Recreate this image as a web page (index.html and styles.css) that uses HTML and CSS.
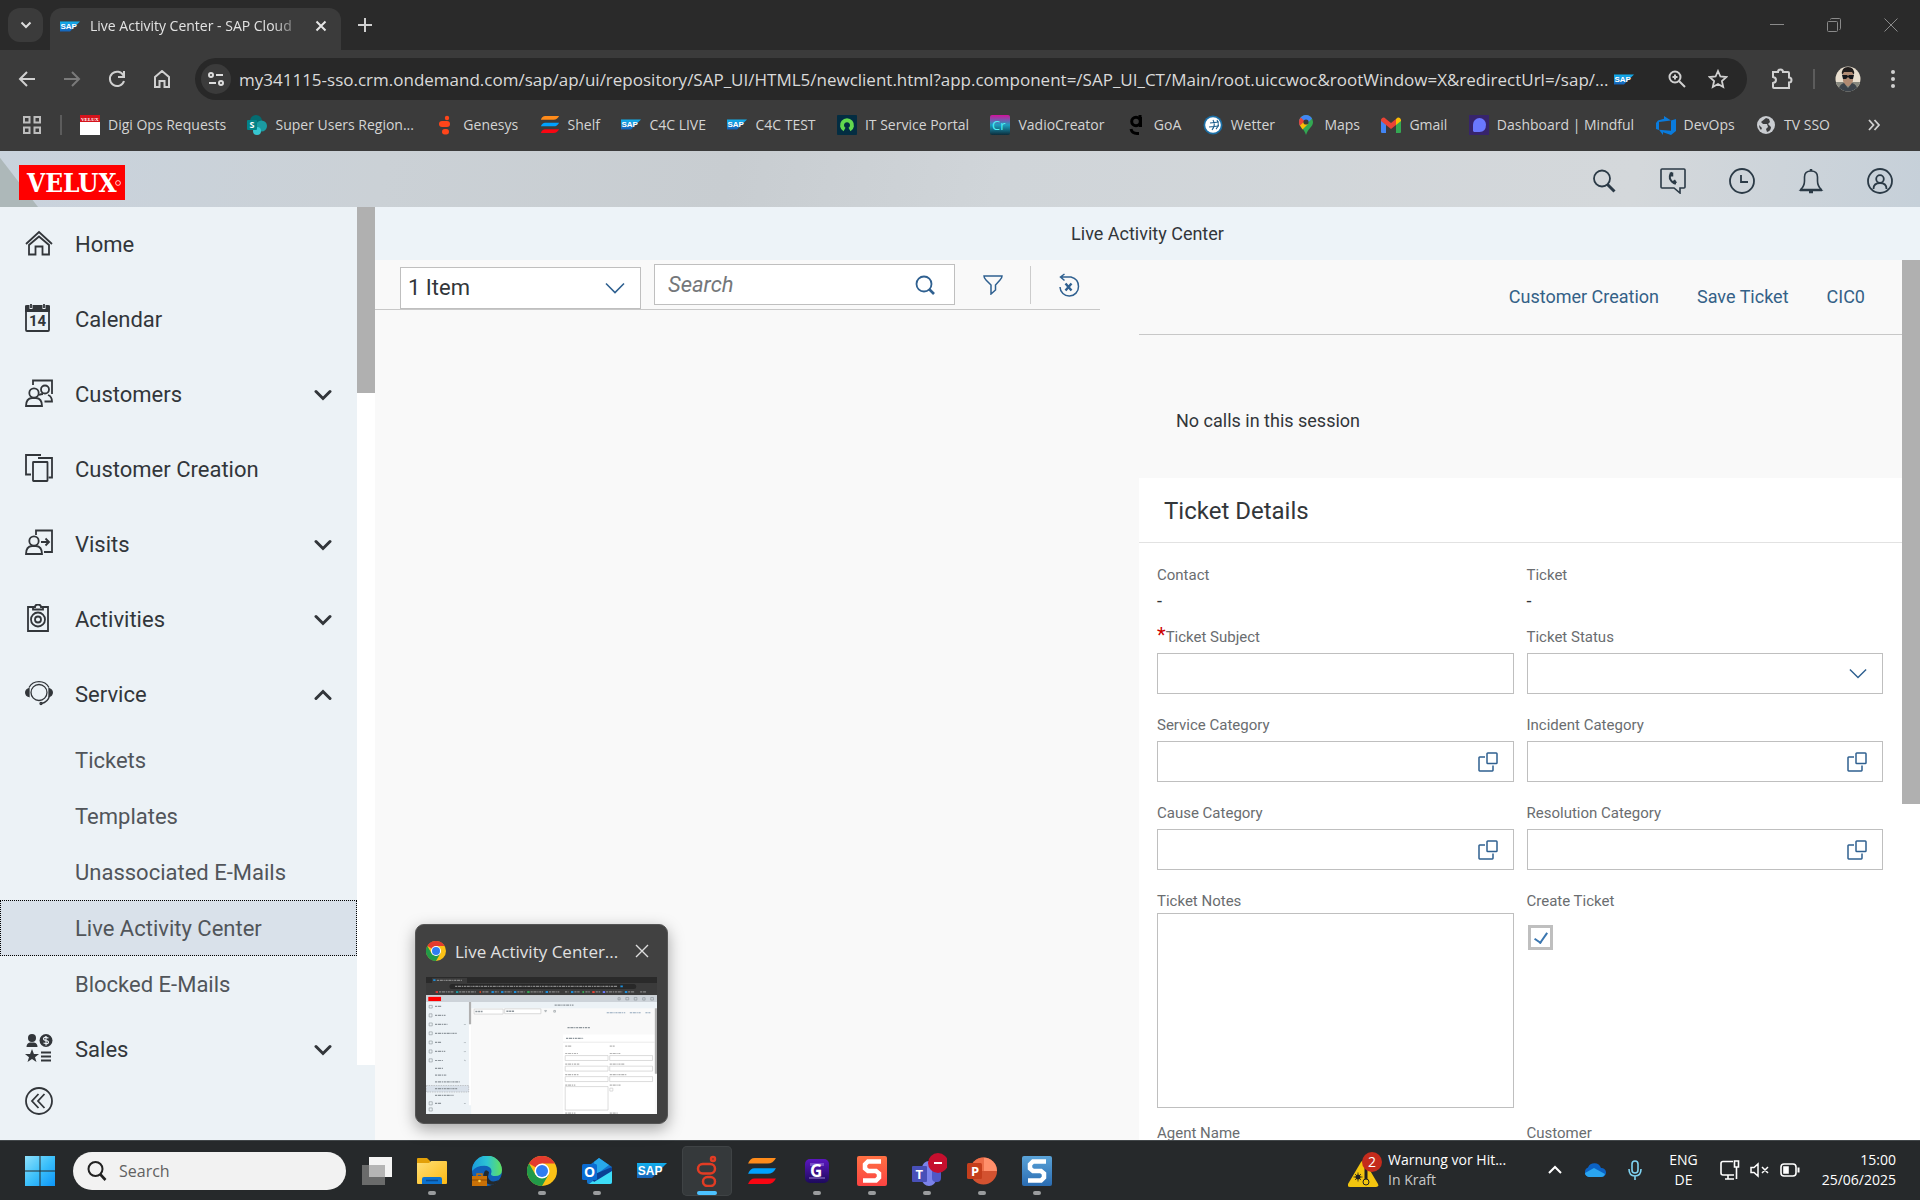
FILE: index.html
```html
<!DOCTYPE html>
<html lang="en">
<head>
<meta charset="utf-8">
<title>Live Activity Center - SAP Cloud</title>
<link rel="stylesheet" href="styles.css">
</head>
<body>
<svg class="sprite" width="0" height="0" aria-hidden="true">
  <defs>
    <linearGradient id="g-sap" x1="0" y1="0" x2="0" y2="1"><stop offset="0" stop-color="#12b0ee"/><stop offset="1" stop-color="#1661b8"/></linearGradient>
    <linearGradient id="g-win" x1="0" y1="0" x2="1" y2="1"><stop offset="0" stop-color="#8fe0fb"/><stop offset=".5" stop-color="#3cc0fb"/><stop offset="1" stop-color="#0c95f8"/></linearGradient>
    <linearGradient id="g-fold" x1="0" y1="0" x2="1" y2="1"><stop offset="0" stop-color="#ffdf77"/><stop offset="1" stop-color="#fdb913"/></linearGradient>
    <linearGradient id="g-edge" x1="0" y1="0" x2="1" y2="0"><stop offset="0" stop-color="#1a9bdc"/><stop offset=".5" stop-color="#2cc3d4"/><stop offset="1" stop-color="#62e05c"/></linearGradient>
    <linearGradient id="g-cr" x1="0" y1="0" x2="0" y2="1"><stop offset="0" stop-color="#d3119c"/><stop offset=".5" stop-color="#1c9fc0"/><stop offset="1" stop-color="#0c2c3a"/></linearGradient>
    <linearGradient id="g-red" x1="0" y1="0" x2="0" y2="1"><stop offset="0" stop-color="#ff7043"/><stop offset="1" stop-color="#fb4342"/></linearGradient>
    <linearGradient id="g-blue" x1="0" y1="0" x2="0" y2="1"><stop offset="0" stop-color="#5aa3d8"/><stop offset="1" stop-color="#2a6cb2"/></linearGradient>
    <linearGradient id="g-g" x1="0" y1="0" x2="0" y2="1"><stop offset="0" stop-color="#5b16c0"/><stop offset="1" stop-color="#1d0a5c"/></linearGradient>
  </defs>
</svg>
<svg class="symbols" aria-hidden="true">
  <symbol id="i-sap" viewBox="0 0 40 22"><path d="M0 1h40L20 21H0z" fill="url(#g-sap)"/><text x="1" y="16.500" class="sap-word">SAP</text></symbol>
  <symbol id="i-shelf" viewBox="0 0 30 28"><path d="M7 0h23q-3 6-9 6H0q2-6 7-6z" fill="#ff8b1a"/><path d="M7 11h23q-3 6-9 6H0q2-6 7-6z" fill="#00a2ff"/><path d="M7 22h23q-3 6-9 6H0q2-6 7-6z" fill="#f90612"/></symbol>
  <symbol id="i-chrome" viewBox="0 0 30 30"><circle cx="15" cy="15" r="15" fill="#fbc116"/><path d="M15 15L2 7.500A15 15 0 0 1 28 7.500H15z" fill="#e33b2e"/><path d="M15 15L8.500 18.800 2 7.500A15 15 0 0 0 15 30l6.500-11.300z" fill="#229a48"/><circle cx="15" cy="15" r="7.500" fill="#fff"/><circle cx="15" cy="15" r="6" fill="#2f7df0"/></symbol>
  <symbol id="i-down" viewBox="0 0 18 12"><path d="M2 2.500l7 7 7-7" fill="none" stroke="currentColor" stroke-width="3" stroke-linecap="round"/></symbol>
  <symbol id="i-thin" viewBox="0 0 20 12"><path d="M1 1.500l9 9 9-9" fill="none" stroke="currentColor" stroke-width="1.600"/></symbol>
  <symbol id="i-help" viewBox="0 0 20 20"><rect x="9" y="1" width="10" height="10.500" rx=".8"/><path d="M7 5H1.700q-.7 0-.7.700v12.600q0 .7.700.7H14.300q.7 0 .7-.7V13.500"/></symbol>
</svg>

<header class="browser">
  <div class="tabstrip">
    <button class="tab-search" aria-label="Search tabs"><svg width="12" height="8" viewBox="0 0 12 8"><path d="M1.500 1.500L6 6l4.500-4.500" fill="none" stroke="#ddd" stroke-width="2"/></svg></button>
    <div class="tab">
      <svg width="20" height="11"><use href="#i-sap"/></svg>
      <span class="tab-title">Live Activity Center - SAP Cloud</span>
      <button class="plain" aria-label="Close tab"><svg width="12" height="12" viewBox="0 0 12 12"><path d="M1.500 1.500l9 9m0-9l-9 9" stroke="#e6e6e6" stroke-width="2"/></svg></button>
    </div>
    <button class="plain new-tab" aria-label="New tab"><svg width="14" height="14" viewBox="0 0 14 14"><path d="M7 0v14M0 7h14" stroke="#d0d0d0" stroke-width="2"/></svg></button>
    <div class="window-buttons">
      <button class="plain" aria-label="Minimize"><svg width="14" height="14" viewBox="0 0 14 14"><path d="M0 6.500h14" stroke="#8a8a8a"/></svg></button>
      <button class="plain" aria-label="Restore"><svg width="14" height="14" viewBox="0 0 14 14" fill="none" stroke="#8a8a8a"><rect x=".5" y="3.500" width="10" height="10" rx="1"/><path d="M3.500 1.500q0-1 1-1h8q1 0 1 1v9q0 1-1 1"/></svg></button>
      <button class="plain" aria-label="Close"><svg width="14" height="14" viewBox="0 0 14 14"><path d="M.5.500l13 13m0-13l-13 13" stroke="#8a8a8a"/></svg></button>
    </div>
  </div>

  <div class="toolbar">
    <div class="nav-buttons">
      <button class="plain" aria-label="Back"><svg width="18" height="18" viewBox="0 0 18 18" fill="none" stroke="#d0d0d0" stroke-width="2"><path d="M17 9H2M9 2L2 9l7 7"/></svg></button>
      <button class="plain" aria-label="Forward"><svg width="18" height="18" viewBox="0 0 18 18" fill="none" stroke="#7a7a7a" stroke-width="2"><path d="M1 9h15M9 2l7 7-7 7"/></svg></button>
      <button class="plain" aria-label="Reload"><svg width="18" height="18" viewBox="0 0 18 18" fill="none" stroke="#d0d0d0" stroke-width="2"><path d="M15.500 5.500A7.200 7.200 0 1 0 16 11M16 1v6h-6"/></svg></button>
      <button class="plain" aria-label="Home"><svg width="18" height="18" viewBox="0 0 18 18" fill="none" stroke="#d0d0d0" stroke-width="2"><path d="M2 7l7-6 7 6v10h-4.500v-6h-5v6H2z"/></svg></button>
    </div>
    <div class="omnibox">
      <button class="site-info" aria-label="Site information"><svg width="16" height="14" viewBox="0 0 16 14" fill="none" stroke="#ddd" stroke-width="2"><circle cx="3" cy="3" r="2"/><path d="M8 3h7M1 11h7"/><circle cx="13" cy="11" r="2"/></svg></button>
      <input class="url" aria-label="Address" value="my341115-sso.crm.ondemand.com/sap/ap/ui/repository/SAP_UI/HTML5/newclient.html?app.component=/SAP_UI_CT/Main/root.uiccwoc&amp;rootWindow=X&amp;redirectUrl=/sap/...">
      <svg width="20" height="11"><use href="#i-sap"/></svg>
      <div class="omni-actions">
      <button class="plain" aria-label="Zoom"><svg width="18" height="18" viewBox="0 0 18 18" fill="none" stroke="#d0d0d0" stroke-width="2"><circle cx="7" cy="7" r="5.500"/><path d="M11 11l6 6M7 4.500v5M4.500 7h5" /></svg></button>
      <button class="plain" aria-label="Bookmark"><svg width="20" height="20" viewBox="0 0 20 20" fill="none" stroke="#d0d0d0" stroke-width="1.800"><path d="M10 2l2.400 5.500 6 .5-4.500 4 1.300 6L10 15l-5.200 3 1.300-6-4.500-4 6-.5z"/></svg></button>
      </div>
    </div>
    <div class="toolbar-end">
      <button class="plain" aria-label="Extensions"><svg width="22" height="22" viewBox="0 0 22 22" fill="none" stroke="#d0d0d0" stroke-width="2"><path d="M2 4h5q0-2.500 2.500-2.500T12 4h5q1 0 1 1v4.500q2.500 0 2.500 2.500T18 14.500V20H3q-1 0-1-1v-4q3-.5 3-3T2 9z"/></svg></button>
      <span class="tb-sep"></span>
      <button class="plain" aria-label="Profile"><svg width="26" height="26" viewBox="0 0 26 26"><clipPath id="av"><circle cx="13" cy="13" r="12.500"/></clipPath><g clip-path="url(#av)"><path fill="#e9dfcf" d="M0 0h26v26H0z"/><path fill="#87887f" d="M0 16h26v10H0z"/><path fill="#b08a72" d="M8 5h10v10q-2 5-5 5t-5-5z"/><path fill="#211d1c" d="M7 9q-1-8 6-8t6 8l-2-3H9z"/><path fill="#15161a" d="M7 9h5l1 1 1-1h5l-1 4h-3l-2-2-2 2H8z"/><path fill="#3c434b" d="M3 26q1-8 6-9l4 5 4-5q5 1 6 9z"/></g></svg></button>
      <button class="plain" aria-label="Menu"><svg width="4" height="20" viewBox="0 0 4 20" fill="#d0d0d0"><circle cx="2" cy="3" r="2"/><circle cx="2" cy="10" r="2"/><circle cx="2" cy="17" r="2"/></svg></button>
    </div>
  </div>

  <nav class="bookmarks" aria-label="Bookmarks">
    <button class="plain" aria-label="Tab groups"><svg width="18" height="18" viewBox="0 0 18 18" fill="none" stroke="#bdbdbd" stroke-width="2"><path d="M1 1h5.500v5.500H1zM11.500 1H17v5.500h-5.500zM1 11.500h5.500V17H1zM11.500 11.500H17V17h-5.500z"/></svg></button>
    <span class="tb-sep"></span>
    <div class="bookmark-list">
      <a href="#"><svg width="20" height="20" viewBox="0 0 20 20"><path fill="#fff" d="M0 0h20v20H0z"/><path fill="#d5131c" d="M0 0h20v7H0z"/><text x="1" y="5.500" class="mini-velux">VELUX</text></svg>Digi Ops Requests</a>
      <a href="#"><svg width="20" height="20" viewBox="0 0 20 20"><circle cx="9" cy="6" r="6" fill="#046c71"/><circle cx="14.500" cy="11" r="5.500" fill="#1a9ba1"/><circle cx="10" cy="16" r="4" fill="#37c6d0"/><rect y="5" width="10" height="10" rx="1" fill="#038387"/><text x="2.500" y="13" class="glyph" font-size="9">S</text></svg>Super Users Region...</a>
      <a href="#"><svg width="20" height="20" viewBox="0 0 20 20" fill="#ff451a"><circle cx="12" cy="3" r="2.200"/><rect x="4" y="6" width="11" height="6" rx="3"/><rect x="7" y="14" width="7" height="5.500" rx="2.700"/></svg>Genesys</a>
      <a href="#"><svg width="20" height="17"><use href="#i-shelf"/></svg>Shelf</a>
      <a href="#"><svg width="20" height="11"><use href="#i-sap"/></svg>C4C LIVE</a>
      <a href="#"><svg width="20" height="11"><use href="#i-sap"/></svg>C4C TEST</a>
      <a href="#"><svg width="20" height="20" viewBox="0 0 20 20"><rect width="20" height="20" rx="1" fill="#032d42"/><path d="M7.500 14.500a5 5 0 1 1 5 0" fill="none" stroke="#62d84e" stroke-width="4"/></svg>IT Service Portal</a>
      <a href="#"><svg width="20" height="20" viewBox="0 0 20 20"><rect width="20" height="20" rx="2" fill="url(#g-cr)"/><text x="2" y="15" font-size="13" class="glyph cyan">Cr</text></svg>VadioCreator</a>
      <a href="#"><svg width="20" height="20" viewBox="0 0 20 20" fill="none" stroke="#000" stroke-width="3"><circle cx="10" cy="6.500" r="4.300"/><path d="M15.500 1h-3M14.500 2v10M5 14q1 4.500 6 4.500h2"/></svg>GoA</a>
      <a href="#"><svg width="20" height="20" viewBox="0 0 20 20"><circle cx="10" cy="10" r="9.500" fill="#1b6fa6"/><circle cx="10" cy="10" r="7.800" fill="#fff"/><path d="M7 8l9-1M6 12l10-1M10 5q3 5-1 10M14 5q3 5-1 9" fill="none" stroke="#1b5e8c" stroke-width="1.100"/></svg>Wetter</a>
      <a href="#"><svg width="20" height="20" viewBox="0 0 20 20"><path d="M10 0a7 7 0 0 1 7 7c0 5-5 6-7 13-2-7-7-8-7-13a7 7 0 0 1 7-7z" fill="#32a852"/><path d="M10 0a7 7 0 0 1 6 3.500L8 12 4 10.500A7 7 0 0 1 10 0z" fill="#4285f4"/><path d="M4.800 2.500L9 6.500 4 11Q1.500 6 4.800 2.500z" fill="#ea4335"/><path d="M4 10.500L9 6l3 3-5.500 5.500z" fill="#fbbc04"/><circle cx="10" cy="7" r="2.600" fill="#3a3a3a"/></svg>Maps</a>
      <a href="#"><svg width="20" height="16" viewBox="0 0 20 16"><path d="M0 3v12q0 1 1 1h4V7z" fill="#4285f4"/><path d="M20 3v12q0 1-1 1h-4V7z" fill="#34a853"/><path d="M0 4V2.500Q2-1 5 2l5 4 5-4v6l-5 4-5-4z" fill="#ea4335"/><path d="M15 2v6l5-4V2.500Q18-1 15 2z" fill="#fbbc04"/></svg>Gmail</a>
      <a href="#"><svg width="20" height="20" viewBox="0 0 20 20"><path fill="#37246b" d="M0 0h20v20H0z"/><path d="M4 16V9.500a6.500 6.500 0 0 1 13 0Q17 17 10.500 17H5z" fill="#6a78ff"/></svg>Dashboard | Mindful</a>
      <a href="#"><svg width="20" height="20" viewBox="0 0 20 20" fill="#0a7bdc"><path d="M20 4v12l-5 4-8-2.800V20L3 14.800l12 1V5.400zM15 5.500L8 1v2.700L2 5.500 0 8v6l3 1V7z"/></svg>DevOps</a>
      <a href="#"><svg width="20" height="20" viewBox="0 0 20 20"><circle cx="10" cy="10" r="9" fill="#c9ccd0"/><path d="M10 3l-5 4 2 2h4l1 3-2 2 1 3q4-1 4-5l-3-3 2-2-1-3zM3 10l3 3-1 2q-2-2-2-5z" fill="#3b3c3e"/></svg>TV SSO</a>
    </div>
    <button class="plain more" aria-label="More bookmarks"><svg width="12" height="12" viewBox="0 0 12 12" fill="none" stroke="#d0d0d0" stroke-width="1.800"><path d="M1 1l4.500 5L1 11M6.500 1L11 6l-4.500 5"/></svg></button>
  </nav>
</header>

<div class="app">
  <header class="shell">
    <svg class="logo" width="106" height="35" viewBox="0 0 106 35"><path d="M0 0h106v35H0z" fill="#f00"/><text x="8" y="27" class="velux">VELUX</text><circle cx="99" cy="18" r="2.400" fill="none" stroke="#fff" stroke-width=".8"/></svg>
    <div class="shell-icons">
      <button class="plain" aria-label="Search"><svg width="26" height="26" viewBox="0 0 26 26" fill="none" stroke="#2b3a46"><circle cx="11" cy="10.500" r="8" stroke-width="1.800"/><path d="M16.500 16.500l7 7" stroke-width="3"/></svg></button>
      <button class="plain" aria-label="Phone"><svg width="26" height="26" viewBox="0 0 26 26" fill="none" stroke="#2b3a46" stroke-width="1.600"><path d="M2 1h22q1 0 1 1v17q0 1-1 1h-4v5l-6-5H2q-1 0-1-1V2q0-1 1-1z"/><path d="M12 4.500q-4 4-1 8 2 3 5 3" stroke-width="2"/><path d="M11.500 4.500v4M13.500 12.500l2 3" stroke-width="3.500"/></svg></button>
      <button class="plain" aria-label="Recent"><svg width="26" height="26" viewBox="0 0 26 26" fill="none" stroke="#2b3a46" stroke-width="1.800"><circle cx="13" cy="13" r="12"/><path d="M12 7v7h7"/></svg></button>
      <button class="plain" aria-label="Notifications"><svg width="26" height="26" viewBox="0 0 26 26" fill="none" stroke="#2b3a46" stroke-width="1.600"><path d="M2.500 22q4-4 4-9V9q0-6 6.500-6t6.500 6v4q0 5 4 9z"/><path d="M13 1v2M2 22h22M11 24h4" stroke-width="2.500"/></svg></button>
      <button class="plain" aria-label="Profile"><svg width="26" height="26" viewBox="0 0 26 26" fill="none" stroke="#2b3a46" stroke-width="1.800"><circle cx="13" cy="13" r="12"/><circle cx="13" cy="11" r="3.800"/><path d="M6.500 21q0-6 6.500-6t6.500 6"/></svg></button>
    </div>
  </header>

  <div class="workspace">
    <aside class="side">
      <div class="side-scroll">
        <nav class="menu" aria-label="Main">
          <a class="item" href="#"><svg width="28" height="28" viewBox="0 0 28 28"><path d="M1 15L14 3l13 12M4 16v9.500h6.500v-8h7v8H24V16L14 7.500z"/></svg>Home</a>
          <a class="item" href="#"><svg width="28" height="28" viewBox="0 0 28 28"><rect x="1" y="2" width="23" height="25" rx="1"/><path d="M1 2.500h23V7H1z" fill="currentColor"/><path d="M6 0v5M19 0v5" stroke="#ecf2f6" stroke-width="3"/><path d="M6 0v4M19 0v4"/><text x="4" y="22" class="cal">14</text></svg>Calendar</a>
          <button class="item"><svg width="28" height="28" viewBox="0 0 28 28"><path d="M8 6V1.500h19V15M19.500 22.500H27q0-5-4-6.500M14 16q2-1 4-1"/><circle cx="9" cy="14" r="4.700"/><circle cx="20" cy="10.500" r="4"/><path d="M1 27q0-7.500 6-8h4q6 .5 6 8z"/></svg>Customers<svg class="arrow" width="18" height="12"><use href="#i-down"/></svg></button>
          <a class="item" href="#"><svg width="28" height="28" viewBox="0 0 28 28"><path d="M16 1H1v19.500h5M13 4h14v19.500h-3.500"/><rect x="8" y="8" width="14.500" height="19" rx=".5"/></svg>Customer Creation</a>
          <button class="item"><svg width="28" height="28" viewBox="0 0 28 28"><path d="M11 6V1.500h16V23h-8M16 13h8M20.500 9.500L24 13l-3.500 3.500"/><circle cx="9" cy="12" r="4.700"/><path d="M1 25q0-7.500 6-8h4q6 .5 6 8z"/></svg>Visits<svg class="arrow" width="18" height="12"><use href="#i-down"/></svg></button>
          <button class="item"><svg width="28" height="28" viewBox="0 0 28 28"><path d="M8 3H3v24h20V3h-5M8 5.500V3h2q0-2.500 3-2.500T16 3h2v2.500z"/><circle cx="13" cy="15.500" r="7"/><circle cx="13" cy="15.500" r="3"/></svg>Activities<svg class="arrow" width="18" height="12"><use href="#i-down"/></svg></button>
          <button class="item" aria-expanded="true"><svg width="28" height="28" viewBox="0 0 28 28"><g stroke-width="1.300"><path d="M4 8.500A11.500 11.500 0 0 1 24 8.500M24.500 17q-1.500 6-8 7.500"/><circle cx="14" cy="13.500" r="8"/><path d="M4 9.500q-3.300 1-3.300 4T4 17.500zM24 9.500q3.300 1 3.300 4T24 17.500z" fill="currentColor"/><circle cx="16" cy="24.500" r="1"/></g></svg>Service<svg class="arrow up" width="18" height="12"><use href="#i-down"/></svg></button>
          <a class="sub" href="#">Tickets</a>
          <a class="sub" href="#">Templates</a>
          <a class="sub" href="#">Unassociated E-Mails</a>
          <a class="sub active" href="#" aria-current="page">Live Activity Center</a>
          <a class="sub" href="#">Blocked E-Mails</a>
          <button class="item"><svg width="28" height="28" viewBox="0 0 28 28"><g fill="currentColor" stroke="none"><circle cx="7" cy="4" r="4"/><path d="M1.500 13q0-4 3.500-4.500h4q3.500.5 3.500 4.500z"/><circle cx="21" cy="6.500" r="6.500"/><path d="M7 15l1.900 5H14l-4 3.200L11.500 28 7 25l-4.500 3L4 23.200 0 20h5.100z"/></g><path d="M16 18.500h10M16 22.500h10M16 26.500h10" stroke-width="2"/><path d="M23.500 4q-5-1.500-5 .8 0 1.400 2.500 1.700t2.500 1.800q0 2.200-5 .7M21 2v9.500" stroke="#ecf2f6" stroke-width="1.200"/></svg>Sales<svg class="arrow" width="18" height="12"><use href="#i-down"/></svg></button>
        </nav>
        <div class="scrollbar"><div class="thumb"></div></div>
      </div>
      <div class="side-foot"><button class="plain" aria-label="Collapse navigation"><svg width="28" height="28" viewBox="0 0 28 28"><circle cx="14" cy="14" r="13"/><path d="M13.500 7L7 14l6.500 7M19.500 7L13 14l6.500 7"/></svg></button></div>
    </aside>

    <main class="content">
      <h1 class="page-title">Live Activity Center</h1>
      <div class="panes">
        <section class="list-pane">
          <div class="list-tools">
            <div class="select-box"><select aria-label="Items"><option>1 Item</option></select><svg width="20" height="12"><use href="#i-thin"/></svg></div>
            <div class="search-box"><input type="search" placeholder="Search" aria-label="Search"><svg width="20" height="20" viewBox="0 0 20 20" fill="none" stroke="currentColor"><circle cx="9" cy="9" r="7.500" stroke-width="1.800"/><path d="M14 14l5 5" stroke-width="2.600"/></svg></div>
            <button class="plain filter" aria-label="Filter"><svg width="20" height="20" viewBox="0 0 20 20" fill="none" stroke="currentColor" stroke-width="1.500"><path d="M1 1h18q0 2-2 4l-4.500 5v5L8 19V10L3 5Q1 3 1 1z"/></svg></button>
            <span class="tool-sep"></span>
            <button class="plain reset" aria-label="Reset"><svg width="22" height="24" viewBox="0 0 22 24" fill="none" stroke="currentColor" stroke-width="1.500"><path d="M2.500 4H13q7.500 2 7.500 9.500A9 9 0 0 1 2 14M6.500 1l-4 3 4 3.500"/><path d="M7.500 10.500l6 7m0-7l-6 7" stroke-width="2.400"/></svg></button>
          </div>
        </section>
        <section class="detail-pane">
          <div class="actions"><a href="#">Customer Creation</a><a href="#">Save Ticket</a><a href="#">CIC0</a></div>
          <p class="no-calls">No calls in this session</p>
          <form class="card">
            <h2>Ticket Details</h2>
            <div class="fields">
              <div class="field ro"><span class="label">Contact</span><span class="value">-</span></div>
              <div class="field ro"><span class="label">Ticket</span><span class="value">-</span></div>
              <div class="field"><label for="subject"><span class="req">*</span>Ticket Subject</label><div class="box"><input id="subject"></div></div>
              <div class="field"><label for="status">Ticket Status</label><div class="box"><select id="status"><option></option></select><svg width="18" height="11"><use href="#i-thin"/></svg></div></div>
              <div class="field"><label for="service">Service Category</label><div class="box"><input id="service"><svg width="20" height="20"><use href="#i-help"/></svg></div></div>
              <div class="field"><label for="incident">Incident Category</label><div class="box"><input id="incident"><svg width="20" height="20"><use href="#i-help"/></svg></div></div>
              <div class="field"><label for="cause">Cause Category</label><div class="box"><input id="cause"><svg width="20" height="20"><use href="#i-help"/></svg></div></div>
              <div class="field"><label for="resolution">Resolution Category</label><div class="box"><input id="resolution"><svg width="20" height="20"><use href="#i-help"/></svg></div></div>
              <div class="field notes"><label for="notes">Ticket Notes</label><textarea id="notes"></textarea></div>
              <div class="field notes"><label for="create">Create Ticket</label><input class="tick" type="checkbox" id="create" checked></div>
              <div class="field"><span class="label">Agent Name</span></div>
              <div class="field"><span class="label">Customer</span></div>
            </div>
          </form>
        </section>
        <div class="scrollbar page-scroll"><div class="thumb"></div></div>
      </div>
    </main>
  </div>

  <div class="preview">
    <div class="preview-head"><svg width="20" height="20"><use href="#i-chrome"/></svg><span>Live Activity Center...</span><button class="plain" aria-label="Close window"><svg width="14" height="14" viewBox="0 0 14 14"><path d="M1 1l12 12M13 1L1 13" stroke="#ddd" stroke-width="1.400"/></svg></button></div>
    <svg class="shot" viewBox="0 0 1920 1140" aria-hidden="true">
      <path fill="#f9f9f9" d="M0 0h1920v1140H0z"/><path fill="#2a2a2a" d="M0 0h1920v50H0z"/><path fill="#3b3b3b" d="M0 50h1920v101H0zM50 8h291v50H50z"/><rect x="195" y="58" width="1552" height="42" rx="21" fill="#282828"/>
      <path fill="#cdd3d9" d="M0 151h1920v56H0z"/><path fill="#f00" d="M19 165h106v35H19z"/><path fill="#ecf2f6" d="M0 207h375v933H0zM375 207h1545v53H375z"/><path fill="#fff" d="M357 393h18v672h-18zM1139 478h763v662h-763z"/><path fill="#b0b0b0" d="M357 207h18v186h-18zM1902 260h18v544h-18z"/><path fill="#d9e1ea" stroke="#999" stroke-width="4" stroke-dasharray="12 8" d="M2 902h353v54H2z"/>
      <g stroke-width="10" fill="none" stroke-dasharray="18 6 26 6 10 6">
        <path stroke="#888" d="M90 28h208M242 78h1350M108 124h120M276 124h140M469 124h54M571 124h33M652 124h60M759 124h61M869 124h104M1021 124h87M1155 124h29M1233 124h44M1325 124h36M1410 124h38M1497 124h134M1680 124h52M1780 124h49"/>
        <path stroke="#8f979d" d="M75 244h57M75 319h87M75 394h103M75 469h180M75 544h50M75 619h85M75 694h70M75 759h66M75 816h98M75 872h206M75 928h184M75 984h154M75 1050h52M1069 233h157M1176 420h186M1164 510h145"/>
        <path stroke="#93a8bc" d="M1502 297h154M1694 297h93M1824 297h41"/>
        <path stroke="#b4b4b4" d="M1157 574h53M1527 574h41M1157 636h106M1527 636h88M1157 724h117M1527 724h121M1157 811h110M1527 811h139M1157 899h84M1527 899h90M1157 1131h85M1527 1131h66"/>
      </g>
      <g stroke-width="16"><path stroke="#d23b34" d="M80 125h20"/><path stroke="#1a9ba1" d="M249 125h20"/><path stroke="#ff451a" d="M446 125h9"/><path stroke="#1c8fdc" d="M544 125h20M624 125h20M731 125h20M994 125h20M1205 125h20M1653 125h20M60 26h19M1616 78h20"/><path stroke="#32a852" d="M841 125h20M1300 125h14"/><path stroke="#ea4335" d="M1382 125h20"/><path stroke="#6a78ff" d="M1469 125h20"/></g>
      <g fill="none" stroke="#8b9298" stroke-width="5"><path d="M26 236h26v22H26zM26 306h24v26H26zM26 382h26v24H26zM26 456h26v24H26zM26 532h26v24H26zM26 606h24v26H26zM26 680h26v26H26zM26 1037h26v26H26zM26 1088h26v26H26zM316 392l7 7 7-7M316 542l7 7 7-7M316 617l7 7 7-7M316 697l7-7 7 7M316 1048l7 7 7-7M1596 172h18v18h-18zM1661 170h24v20h-24zM1731 170h22v22h-22zM1801 172h20v20h-20zM1868 170h22v22h-22zM986 278h16l-8 14zM1062 278h14v14h-14z"/></g>
      <g fill="#fff" stroke="#c4c4c4" stroke-width="5"><path d="M400 267h241v41H400zM654 265h301v40H654zM1157 653h356v41h-356zM1527 653h356v41h-356zM1157 741h356v41h-356zM1527 741h356v41h-356zM1157 828h356v41h-356zM1527 828h356v41h-356zM1157 911h356v195h-356zM1528 924h25v24h-25z"/></g>
      <path stroke="#8f979d" stroke-width="12" stroke-dasharray="18 5" d="M410 286h60M668 284h66"/><path stroke="#ddd" stroke-width="5" d="M1139 542h763"/>
    </svg>
  </div>
</div>

<footer class="taskbar">
  <div class="task-left">
    <button class="plain" aria-label="Start"><svg width="30" height="30" viewBox="0 0 30 30" fill="url(#g-win)"><path d="M0 0h14.500v14.500H0zM15.500 0H30v14.500H15.500zM0 15.500h14.500V30H0zM15.500 15.500H30V30H15.500z"/></svg></button>
    <label class="task-search"><svg width="20" height="20" viewBox="0 0 20 20" fill="none" stroke="#222" stroke-width="2"><circle cx="8.500" cy="8" r="7"/><path d="M13 13l5.500 6" stroke-width="2.600"/></svg><input placeholder="Search" aria-label="Search Windows"></label>
  </div>
  <div class="task-apps">
    <button aria-label="Task view"><svg width="30" height="30" viewBox="0 0 30 30"><path d="M7 1h23v20H7z" fill="#f4f4f4"/><path d="M0 9h23v20H0z" fill="#777" opacity=".85"/><path d="M7 9h16v12H7z" fill="#b5b5b5"/></svg></button>
    <button class="open" aria-label="File Explorer"><svg width="30" height="30" viewBox="0 0 30 30"><path d="M0 3q0-1 1-1h9l3 3v6H0z" fill="#e3a008"/><path d="M0 7h12l2-2h15q1 0 1 1v21q0 1-1 1H1q-1 0-1-1z" fill="url(#g-fold)"/><path d="M5 28v-5q0-2 2-2h16q2 0 2 2v5z" fill="#0c72cf"/><path d="M9 24.500h12" stroke="#0a4a8e" stroke-width="1.500"/></svg></button>
    <button aria-label="Edge"><svg width="30" height="30" viewBox="0 0 30 30"><circle cx="15" cy="15" r="15" fill="#1060b8"/><path d="M0 15A15 15 0 0 1 30 14q0 6-7 6-4 0-4-2 2-6-4-8-10-1-15 5z" fill="url(#g-edge)"/><path d="M12 17a7 7 0 0 0 15 7q-9 4-11-3l1-5q-4-4-5 1z" fill="#24292c"/><path d="M0 20h15v10H0z" fill="#c97107"/><path d="M5 20v-2h5v2" fill="none" stroke="#c97107" stroke-width="1.500"/><path d="M0 24h15" stroke="#8b4a02"/><circle cx="7.500" cy="25" r="1.300" fill="#ffd34d"/></svg></button>
    <button class="open" aria-label="Chrome"><svg width="30" height="30"><use href="#i-chrome"/></svg></button>
    <button class="open" aria-label="Outlook"><svg width="30" height="30" viewBox="0 0 30 30"><path d="M5 11L17 2l13 9v15q0 2-2 2H7q-2 0-2-2z" fill="#1272cc"/><path d="M12 6l5-4 10 7-12 9z" fill="#28a8ea"/><path d="M30 11v15q0 2-2 2H7l12-9z" fill="#3ddcf7"/><path d="M30 11v4L12 26l-4-6z" fill="#0b3f94"/><rect y="8" width="15" height="16" rx="1.500" fill="#0a6bd2"/><text x="2" y="21" font-size="14" class="glyph">O</text></svg></button>
    <button aria-label="SAP"><svg width="30" height="17"><use href="#i-sap"/></svg></button>
    <button class="open current" aria-label="Genesys"><svg width="30" height="32" viewBox="0 0 30 32" fill="none" stroke="#e23c24" stroke-width="2.500"><circle cx="21" cy="4" r="2"/><rect x="6" y="9" width="17" height="9.500" rx="4.700"/><rect x="11" y="22" width="12" height="9" rx="4.500"/></svg></button>
    <button aria-label="Shelf"><svg width="30" height="26"><use href="#i-shelf"/></svg></button>
    <button class="open" aria-label="G app"><svg width="26" height="26" viewBox="0 0 26 26"><rect x="1" y="1" width="24" height="24" rx="5" fill="url(#g-g)"/><path d="M6 5h14v3H6zM5 19h16v2H5z" fill="#c9b8ff" opacity=".35"/><text x="6" y="19" font-size="17" class="glyph">G</text></svg></button>
    <button class="open" aria-label="Snagit"><svg width="30" height="30" viewBox="0 0 30 30"><rect width="30" height="30" rx="2" fill="url(#g-red)"/><path d="M24 5.500H11L8 8.500v4l3 2.500h8l3 2.500v4l-3 3H6" fill="none" stroke="#fff" stroke-width="4.500"/></svg></button>
    <button class="open" aria-label="Teams"><svg width="40" height="36" viewBox="0 0 40 36"><rect x="15" y="8" width="14" height="25" rx="7" fill="#7b83eb"/><rect x="25" y="15" width="9" height="14" rx="4" fill="#4f58c6"/><rect x="5" y="13" width="15" height="16" rx="1" fill="#4850b8"/><text x="8.500" y="26" font-size="13" class="glyph">T</text><circle cx="31" cy="10" r="10" fill="#c50f2e"/><path d="M27 10h8" stroke="#fff" stroke-width="2"/></svg></button>
    <button class="open" aria-label="PowerPoint"><svg width="30" height="30" viewBox="0 0 30 30"><circle cx="16.500" cy="15" r="13.500" fill="#d35230"/><path d="M16.500 1.500A13.500 13.500 0 0 1 30 15H16.500z" fill="#ff8f6b"/><path d="M16.500 1.500V15H3A13.500 13.500 0 0 1 16.500 1.500z" fill="#ed6c47"/><rect y="7" width="15" height="16" rx="1.500" fill="#c43e1c"/><text x="4" y="20" font-size="13" class="glyph">P</text></svg></button>
    <button class="open" aria-label="Snagit Editor"><svg width="30" height="30" viewBox="0 0 30 30"><rect width="30" height="30" rx="2" fill="url(#g-blue)"/><path d="M24 5.500H11L8 8.500v4l3 2.500h8l3 2.500v4l-3 3H6" fill="none" stroke="#fff" stroke-width="4.500"/></svg></button>
  </div>
  <div class="tray">
    <div class="weather"><svg width="34" height="36" viewBox="0 0 34 36"><path d="M13 10q2-3 4 0l13 22q1 3-2 3H2q-3 0-2-3z" fill="#f3c50f"/><circle cx="10" cy="25" r="2.500" fill="#222"/><path d="M10 20.500v9M5.500 25h9M7 22l6 6m0-6l-6 6" stroke="#222" stroke-width=".8"/><path d="M18 15v14" stroke="#222" stroke-width="3"/><circle cx="18" cy="30" r="3" fill="#f3c50f" stroke="#222"/><circle cx="24" cy="10" r="10" fill="#c42b1c"/><text x="20" y="15" font-size="14" class="glyph reg">2</text></svg>
      <div class="weather-text"><span>Warnung vor Hit...</span><span class="dim">In Kraft</span></div></div>
    <svg width="14" height="9" viewBox="0 0 14 9"><path d="M1 8l6-6 6 6" fill="none" stroke="#fff" stroke-width="2"/></svg>
    <svg width="22" height="14" viewBox="0 0 22 14"><path d="M5 14a5 5 0 0 1-1-9.500A7 7 0 0 1 17 5a4.500 4.500 0 0 1 1 9z" fill="#0b62c4"/><path d="M5 14Q1 13 1 10l9-5 11 6q-1 3-4 3z" fill="#2aa5f0"/></svg>
    <svg width="14" height="20" viewBox="0 0 14 20" fill="none" stroke="#7fd3f2" stroke-width="1.600"><rect x="4" y="1" width="6" height="12" rx="3"/><path d="M1 9q0 7 6 7t6-7M7 16v4"/></svg>
    <div class="lang"><span>ENG</span><span>DE</span></div>
    <div class="sys"><svg width="20" height="20" viewBox="0 0 20 20" fill="none" stroke="#fff" stroke-width="1.600"><path d="M13 1.500H3q-2 0-2 2V13q0 2 2 2h11M5 19h9M8 15v4"/><path d="M14.500 1h4v6h-4zM16.500 7v12"/></svg>
    <svg width="20" height="16" viewBox="0 0 20 16" fill="none" stroke="#fff" stroke-width="1.500"><path d="M1 5.500h3L8 2v12l-4-3.500H1zM12 5l6 6m0-6l-6 6"/></svg>
    <svg width="20" height="14" viewBox="0 0 20 14" fill="none" stroke="#fff" stroke-width="1.600"><rect x="1" y="1" width="15" height="12" rx="3"/><path d="M4 4h4v6H4z" fill="#fff"/><path d="M18.500 4.500v5" stroke-width="2"/></svg></div>
    <div class="clock"><span>15:00</span><span>25/06/2025</span></div>
  </div>
</footer>
</body>
</html>
```
FILE: styles.css
```css
* { box-sizing: border-box; }
html, body { margin: 0; height: 100%; }
body {
  display: flex;
  flex-direction: column;
  min-height: 100vh;
  overflow: hidden;
  background: #f9f9f9;
  color: #32363a;
  font-family: Roboto, "Liberation Sans", sans-serif;
  font-size: 18px;
}
button, input, select, textarea { font: inherit; color: inherit; }
svg { flex: none; display: block; }
a { color: inherit; text-decoration: none; }
p, h1, h2 { margin: 0; font-weight: 400; }
.sprite { position: absolute; }
.symbols { display: none; }
.plain {
  display: flex;
  align-items: center;
  justify-content: center;
  padding: 0;
  border: 0;
  background: none;
}

.sap-word { font: 700 16px "Liberation Sans", sans-serif; fill: #fff; }
.glyph { font-family: "Open Sans", sans-serif; font-weight: 700; fill: #fff; }
.glyph.reg { font-weight: 400; }
.glyph.cyan { font-weight: 400; fill: #4ff0f5; }
.mini-velux { font: 700 5px "Liberation Serif", serif; fill: #fff; }
.velux { font: 700 26px "DejaVu Serif Condensed", "DejaVu Serif", serif; fill: #fff; }
.cal { font: 700 15px Roboto, sans-serif; fill: currentColor; stroke: none; }

/* Browser frame */
.browser {
  flex: none;
  background: #3b3b3b;
  color: #d4d4d4;
  font-family: "Open Sans", "Noto Sans", sans-serif;
  font-size: 14px;
}
.tabstrip {
  display: flex;
  align-items: center;
  height: 50px;
  padding-left: 8px;
  background: #2a2a2a;
}
.tab-search {
  display: flex;
  align-items: center;
  justify-content: center;
  width: 35px;
  height: 34px;
  border: 0;
  border-radius: 12px;
  background: #3b3b3b;
}
.tab {
  display: flex;
  align-items: center;
  align-self: flex-end;
  gap: 10px;
  width: 291px;
  height: 42px;
  margin-left: 7px;
  padding: 0 14px 8px 10px;
  border-radius: 12px 12px 0 0;
  background: #3b3b3b;
  color: #e3e3e3;
}
.tab svg { margin-top: 2px; }
.tab-title {
  flex: 1;
  overflow: hidden;
  white-space: nowrap;
  mask-image: linear-gradient(to right, #000 85%, transparent);
}
.new-tab { margin-left: 17px; }
.window-buttons { display: flex; gap: 43px; margin-left: auto; padding-right: 22px; }
.toolbar { display: flex; align-items: center; height: 58px; padding: 0 25px 0 18px; }
.nav-buttons { display: flex; gap: 27px; width: 177px; }
.omnibox {
  display: flex;
  align-items: center;
  flex: 1;
  height: 42px;
  padding: 0 19px 0 6px;
  border-radius: 21px;
  background: #282828;
}
.site-info {
  display: flex;
  align-items: center;
  justify-content: center;
  width: 30px;
  height: 30px;
  padding: 0;
  border: 0;
  border-radius: 50%;
  background: #3b3b3b;
}
.url {
  flex: 1;
  min-width: 0;
  margin: 0 4px 0 8px;
  padding: 0;
  border: 0;
  background: none;
  color: #dadada;
  font-size: 17px;
}
.omni-actions { display: flex; align-items: center; gap: 22px; margin-left: 34px; }
.toolbar-end { display: flex; align-items: center; gap: 20px; margin-left: 24px; }
.toolbar-end .plain:last-child { margin-left: 10px; }
.tb-sep { width: 2px; height: 20px; background: #5c5c5c; }
.bookmarks { display: flex; align-items: center; height: 43px; padding: 0 40px 10px 23px; }
.bookmarks .tb-sep { margin: 0 18px 0 19px; }
.bookmark-list { display: flex; justify-content: space-between; flex: 1; }
.bookmark-list a { display: flex; align-items: center; gap: 8px; white-space: nowrap; }
.more { margin-left: 38px; }

/* Application shell */
.app { position: relative; display: flex; flex-direction: column; flex: 1; min-height: 0; }
.shell {
  position: relative;
  display: flex;
  align-items: center;
  justify-content: space-between;
  flex: none;
  height: 56px;
  padding: 4px 27px 0 19px;
  background: linear-gradient(100deg, #c9d3dd 0, #cbd1d6 20%, #c8cdd1 38%, #d0d5d9 52%, #d4d8db 85%, #c6d0d9 100%);
}
.shell::before {
  content: "";
  position: absolute;
  inset: 0 auto 0 0;
  width: 38px;
  background: #adb8b9;
  clip-path: polygon(0 12%, 100% 100%, 0 100%);
}
.logo { position: relative; margin-top: 3px; }
.shell-icons { display: flex; gap: 43px; }
.workspace { display: flex; flex: 1; min-height: 0; }

.side { display: flex; flex-direction: column; flex: none; width: 375px; background: #ecf2f6; }
.side-scroll { display: flex; flex: 1; min-height: 0; overflow: hidden; }
.menu { flex: 1; font-size: 22px; }
.item, .sub {
  display: flex;
  align-items: center;
  width: 100%;
  border: 0;
  background: none;
  text-align: left;
}
.item { gap: 22px; height: 75px; padding: 0 25px; }
.item > svg:first-child, .side-foot svg { margin-bottom: 4px; fill: none; stroke: currentColor; stroke-width: 1.8; }
.arrow { margin-left: auto; }
.arrow.up { transform: rotate(180deg); }
.sub { height: 56px; padding-left: 75px; color: #51555a; }
.sub.active { background: #d9e1ea; outline: 1px dotted #000; outline-offset: -1px; }
.scrollbar { flex: none; width: 18px; background: #fff; }
.thumb { height: 186px; background: #b0b0b0; }
.side-foot { display: flex; align-items: center; flex: none; height: 75px; padding: 0 25px; }

.content { display: flex; flex-direction: column; flex: 1; min-width: 0; }
.page-title {
  flex: none;
  height: 53px;
  background: #edf3f8;
  font-size: 18px;
  line-height: 53px;
  text-align: center;
}
.panes { display: flex; flex: 1; min-height: 0; overflow: hidden; background: #f9f9f9; }
.list-pane { flex: 725; margin-right: 39px; }
.list-tools {
  display: flex;
  align-items: center;
  height: 50px;
  padding-left: 25px;
  border-bottom: 1px solid #c8c8c8;
  color: #2f6090;
}
.select-box, .search-box, .box {
  display: flex;
  align-items: center;
  border: 1px solid #bfbfbf;
  background: #fff;
  color: #2f6090;
}
.select-box select, .search-box input, .box input, .box select {
  flex: 1;
  min-width: 0;
  height: 100%;
  padding: 0;
  border: 0;
  outline: 0;
  background: none;
  color: #32363a;
  appearance: none;
}
.select-box select { padding-bottom: 2px; }
.select-box { align-self: flex-end; width: 241px; height: 42px; padding: 0 15px 0 7px; font-size: 22px; }
.search-box { width: 301px; height: 41px; margin-left: 13px; padding: 0 19px 0 13px; font-size: 22px; }
.search-box input::placeholder { color: #74777a; font-style: italic; opacity: 1; }
.filter { margin-left: 28px; color: #2f6090; }
.tool-sep { width: 1px; height: 38px; margin: 0 27px; background: #ccc; }
.reset { color: #2f6090; }

.detail-pane { flex: 763; min-width: 0; }
.actions {
  display: flex;
  align-items: center;
  justify-content: flex-end;
  gap: 38px;
  height: 75px;
  padding: 0 37px 2px 0;
  border-bottom: 1px solid #c8c8c8;
  color: #346187;
}
.no-calls { height: 143px; padding: 74px 37px 0; line-height: 24px; }
.card { background: #fff; }
.card h2 { height: 65px; padding-left: 25px; border-bottom: 1px solid #e2e2e2; font-size: 24px; line-height: 66px; }
.fields {
  display: grid;
  grid-template-columns: 1fr 1fr;
  column-gap: 13px;
  padding: 20px 19px 0 18px;
}
.field { display: flex; flex-direction: column; height: 88px; color: #6a6d70; font-size: 15px; line-height: 24px; }
.field.ro { height: 62px; }
.value { color: #32363a; font-size: 18px; line-height: 28px; }
.req { color: #c00; font-size: 20px; line-height: 20px; }
.box { height: 41px; margin-top: 4px; padding-right: 15px; }
.box svg { fill: none; stroke: currentColor; stroke-width: 1.5; }
.field.notes { height: 232px; }
textarea { width: 100%; height: 195px; border: 1px solid #bfbfbf; resize: none; }
.tick {
  appearance: none;
  width: 25px;
  height: 25px;
  margin: 12px 1px;
  border: 3px solid #bfbfbf;
  background: #fff;
}
.tick::before {
  content: "";
  display: block;
  width: 6px;
  height: 11px;
  margin: 2px 6px;
  border: solid #3a76b0;
  border-width: 0 2px 2px 0;
  transform: rotate(35deg);
}
.page-scroll .thumb { height: 544px; }

/* Window preview over the page */
.preview {
  position: absolute;
  left: 415px;
  bottom: 16px;
  width: 253px;
  height: 200px;
  padding: 0 10px;
  border: 1px solid #555;
  border-radius: 9px;
  background: #414141;
  box-shadow: 0 5px 16px rgba(0, 0, 0, .35);
  color: #e0e0e0;
  font: 17px "Open Sans", "Noto Sans", sans-serif;
}
.preview-head { display: flex; align-items: center; height: 52px; gap: 9px; }
.preview-head .plain { margin: 0 8px 0 auto; }
.shot { width: 100%; }

/* Taskbar */
.taskbar {
  display: flex;
  align-items: center;
  flex: none;
  height: 60px;
  border-top: 1px solid #42474a;
  background: #26292b;
  color: #fff;
  font: 14px "Open Sans", "Noto Sans", sans-serif;
}
.task-left { display: flex; align-items: center; gap: 18px; padding-left: 25px; }
.task-search {
  display: flex;
  align-items: center;
  gap: 12px;
  width: 273px;
  height: 38px;
  padding: 0 14px;
  border-radius: 19px;
  background: #f2f2f2;
}
.task-search input { min-width: 0; border: 0; outline: 0; padding: 0; background: none; font-size: 16px; }
.task-search input::placeholder { color: #616161; opacity: 1; }
.task-apps { display: flex; gap: 5px; margin-left: 6px; }
.task-apps button {
  position: relative;
  display: flex;
  align-items: center;
  justify-content: center;
  width: 50px;
  height: 50px;
  padding: 0;
  border: 0;
  border-radius: 5px;
  background: none;
}
.task-apps .open::after {
  content: "";
  position: absolute;
  bottom: 1px;
  width: 8px;
  height: 4px;
  border-radius: 2px;
  background: #9a9c9e;
}
.task-apps .current { background: #35393b; box-shadow: inset 0 0 0 1px #3f4345; }
.task-apps .current::after { width: 20px; background: #4cc2ff; }
.tray { display: flex; align-items: center; margin-left: auto; padding: 0 24px 2px 0; gap: 22px; line-height: 20px; }
.weather { display: flex; align-items: center; gap: 6px; margin-right: 20px; }
.weather-text, .lang, .clock { display: flex; flex-direction: column; white-space: nowrap; }
.dim { color: #c9c9c9; }
.lang { align-items: center; margin-left: 5px; }
.sys { display: flex; align-items: center; gap: 10px; }
.clock { align-items: flex-end; }
```
